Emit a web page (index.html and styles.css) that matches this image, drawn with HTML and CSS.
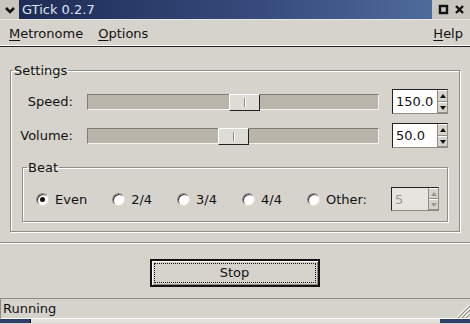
FILE: index.html
```html
<!DOCTYPE html>
<html lang="en">

<head>
    <meta charset="UTF-8">
    <title>GTick 0.2.7</title>
    <link rel="stylesheet" href="styles.css">
</head>

<body>
    <div class="titlebar">
        <div class="tb-menu">
            <svg width="12" height="8" viewBox="0 0 12 8"><path d="M2 2 L6 6 L10 2" stroke="#111" stroke-width="2.6" fill="none"/></svg>
        </div>
        <div class="tb-title">GTick 0.2.7</div>
        <div class="tb-buttons">
            <svg width="11" height="11" viewBox="0 0 11 11"><rect x="2" y="2" width="7" height="7" stroke="#111" stroke-width="2.4" fill="none"/></svg>
            <svg width="11" height="11" viewBox="0 0 11 11"><path d="M2 2 L9 9 M9 2 L2 9" stroke="#111" stroke-width="2.4"/></svg>
        </div>
    </div>

    <div class="menubar">
        <span class="menu"><u>M</u>etronome</span>
        <span class="menu"><u>O</u>ptions</span>
        <span class="menu help"><u>H</u>elp</span>
    </div>

    <div class="main">
        <fieldset class="frame settings">
            <legend>Settings</legend>
            <div class="rows">
                <label>Speed:</label>
                <div class="trough"><div class="handle" style="margin-left: 141px"><i></i></div></div>
                <div class="spin"><span class="value">150.0</span><span class="arrows"><b class="up"></b><b class="down"></b></span></div>

                <label>Volume:</label>
                <div class="trough"><div class="handle" style="margin-left: 130px"><i></i></div></div>
                <div class="spin"><span class="value">50.0</span><span class="arrows"><b class="up"></b><b class="down"></b></span></div>
            </div>

            <fieldset class="frame beat">
                <legend>Beat</legend>
                <div class="radios">
                    <span class="opt"><span class="radio on"></span>Even</span>
                    <span class="opt"><span class="radio"></span>2/4</span>
                    <span class="opt"><span class="radio"></span>3/4</span>
                    <span class="opt"><span class="radio"></span>4/4</span>
                    <span class="opt"><span class="radio"></span>Other:</span>
                    <div class="spin small disabled"><span class="value">5</span><span class="arrows"><b class="up"></b><b class="down"></b></span></div>
                </div>
            </fieldset>
        </fieldset>
    </div>

    <div class="separator"></div>

    <div class="actions">
        <button class="btn"><span>Stop</span></button>
    </div>

    <div class="statusbar">
        <span>Running</span>
        <svg class="grip" width="15" height="15" viewBox="0 0 15 15">
            <path d="M14 2 L2 14 M14 6 L6 14 M14 10 L10 14" stroke="#fff" stroke-width="1"/>
            <path d="M15 3 L3 15 M15 7 L7 15 M15 11 L11 15" stroke="#8e8b84" stroke-width="1"/>
        </svg>
    </div>

    <div class="taskbar">
        <div class="tk-left"></div>
        <div class="tk-mid"></div>
        <div class="tk-right"></div>
    </div>
</body>

</html>
```

FILE: styles.css
```css
body {
    margin: 0;
    width: 470px;
    height: 324px;
    overflow: hidden;
    background: #d6d3cd;
    font-family: "DejaVu Sans", sans-serif;
    font-size: 13px;
    color: #111;
}

/* window title */
.titlebar {
    display: flex;
    height: 19px;
    border-bottom: 1px solid #e8e6e1;
}

.tb-menu {
    width: 19px;
    display: flex;
    align-items: center;
    justify-content: center;
    background: #c9c6bf;
}

.tb-title {
    flex: 1;
    background: linear-gradient(to right, #1e2c55, #35497a 55%, #4e6b9c);
    color: #dfe5f0;
    line-height: 19px;
    padding-left: 3px;
    font-size: 13px;
}

.tb-buttons {
    width: 38px;
    display: flex;
    align-items: center;
    justify-content: center;
    gap: 5px;
    background: #c9c6bf;
}

/* menu */
.menubar {
    display: flex;
    height: 26px;
    align-items: center;
    padding: 0 9px;
    gap: 15px;
    border-bottom: 1px solid #222;
    box-shadow: inset 0 -1px 0 #fff;
}

.menu u {
    text-decoration-thickness: 1px;
    text-underline-offset: 2px;
}

.help {
    margin-left: auto;
    margin-right: -2px;
}

/* frames */
.main {
    padding: 16px 10px 0;
}

.frame {
    margin: 0;
    padding: 0;
    border: 1px solid #8f8c86;
    box-shadow: 1px 1px 0 #fff, inset 1px 1px 0 #fff;
}

.frame legend {
    padding: 0 1px;
    margin-left: 0;
    line-height: 15px;
}

.settings {
    padding: 0 11px 9px 2px;
}

.rows {
    display: grid;
    grid-template-columns: 60px 292px 55px;
    column-gap: 14px;
    row-gap: 9px;
    align-items: center;
    margin-top: 11px;
}

.rows label {
    text-align: right;
}

.trough {
    height: 14px;
    background: #b9b5ab;
    border-top: 1px solid #7f7c75;
    border-left: 1px solid #7f7c75;
    border-bottom: 1px solid #f4f3f0;
    border-right: 1px solid #f4f3f0;
    display: flex;
}

.handle {
    width: 29px;
    height: 15px;
    margin-top: -1px;
    background: #dedcd6;
    border-top: 1px solid #fff;
    border-left: 1px solid #fff;
    border-right: 1px solid #222;
    border-bottom: 1px solid #222;
    display: flex;
    align-items: center;
    justify-content: center;
}

.handle i {
    width: 1px;
    height: 9px;
    background: #8e8b84;
    box-shadow: 1px 0 0 #fff;
}

/* spin button */
.spin {
    display: flex;
    height: 23px;
    margin-left: -1px;
    border: 1px solid #8f8c86;
    border-top-color: #222;
    border-left-color: #222;
    background: #fff;
}

.spin .value {
    flex: 1;
    padding-left: 3px;
    font-size: 13px;
    line-height: 23px;
}

.arrows {
    width: 9px;
    display: flex;
    flex-direction: column;
    background: #d6d3cd;
    border-left: 1px solid #8f8c86;
}

.arrows b {
    flex: 1;
    position: relative;
    border-top: 1px solid #fff;
    border-bottom: 1px solid #8f8c86;
}

.arrows b::after {
    content: "";
    position: absolute;
    left: 2px;
    top: 3px;
    border-left: 3px solid transparent;
    border-right: 3px solid transparent;
}

.arrows .up::after {
    border-bottom: 4px solid #111;
}

.arrows .down::after {
    border-top: 4px solid #111;
}

/* beat */
.beat {
    margin: 12px 0 0 9px;
    padding: 0 0 10px 2px;
}

.frame.beat legend {
    margin-left: 2px;
}

.radios {
    display: flex;
    align-items: center;
    gap: 25px;
    margin: 12px 0 0 11px;
}

.opt {
    display: flex;
    align-items: center;
    gap: 6px;
}

.radio {
    width: 11px;
    height: 11px;
    border-radius: 50%;
    background: #fff;
    border: 1px solid #8f8c86;
    border-right-color: #e0ded8;
    border-bottom-color: #e0ded8;
    box-shadow: inset 1px 1px 0 #333;
    display: flex;
    align-items: center;
    justify-content: center;
}

.radio.on::after {
    content: "";
    width: 5px;
    height: 5px;
    border-radius: 50%;
    background: #111;
}

.spin.small {
    width: 46px;
    height: 22px;
    margin-left: -1px;
}

.spin.disabled {
    background: #e6e4df;
    color: #9a978f;
}

.spin.disabled .arrows b::after {
    border-bottom-color: #9a978f;
    border-top-color: #9a978f;
}

/* bottom */
.separator {
    margin-top: 10px;
    height: 1px;
    background: #8f8c86;
    box-shadow: 0 1px 0 #fff;
}

.actions {
    display: flex;
    justify-content: center;
    padding: 16px 0 11px;
    margin-left: -1px;
}

.btn {
    width: 170px;
    height: 28px;
    padding: 2px;
    border: 2px solid #111;
    background: #d6d3cd;
    font: inherit;
    color: #111;
    box-shadow: inset 1px 1px 0 #fff, inset -1px -1px 0 #8f8c86;
}

.btn span {
    display: block;
    height: 100%;
    box-sizing: border-box;
    border: 1px dotted #111;
    line-height: 18px;
}

.statusbar {
    height: 19px;
    display: flex;
    align-items: center;
    justify-content: space-between;
    padding-left: 2px;
    border-top: 1px solid #8f8c86;
    border-left: 1px solid #8f8c86;
    border-bottom: 1px solid #fff;
    font-size: 13px;
}

.grip {
    align-self: flex-end;
}

.taskbar {
    display: flex;
    height: 4px;
}

.tk-left {
    width: 30px;
    background: #2b3f6c;
}

.tk-mid {
    flex: 1;
    background: #e3e1dc;
    border-left: 1px solid #111;
}

.tk-right {
    width: 30px;
    background: #2b3f6c;
}
```
